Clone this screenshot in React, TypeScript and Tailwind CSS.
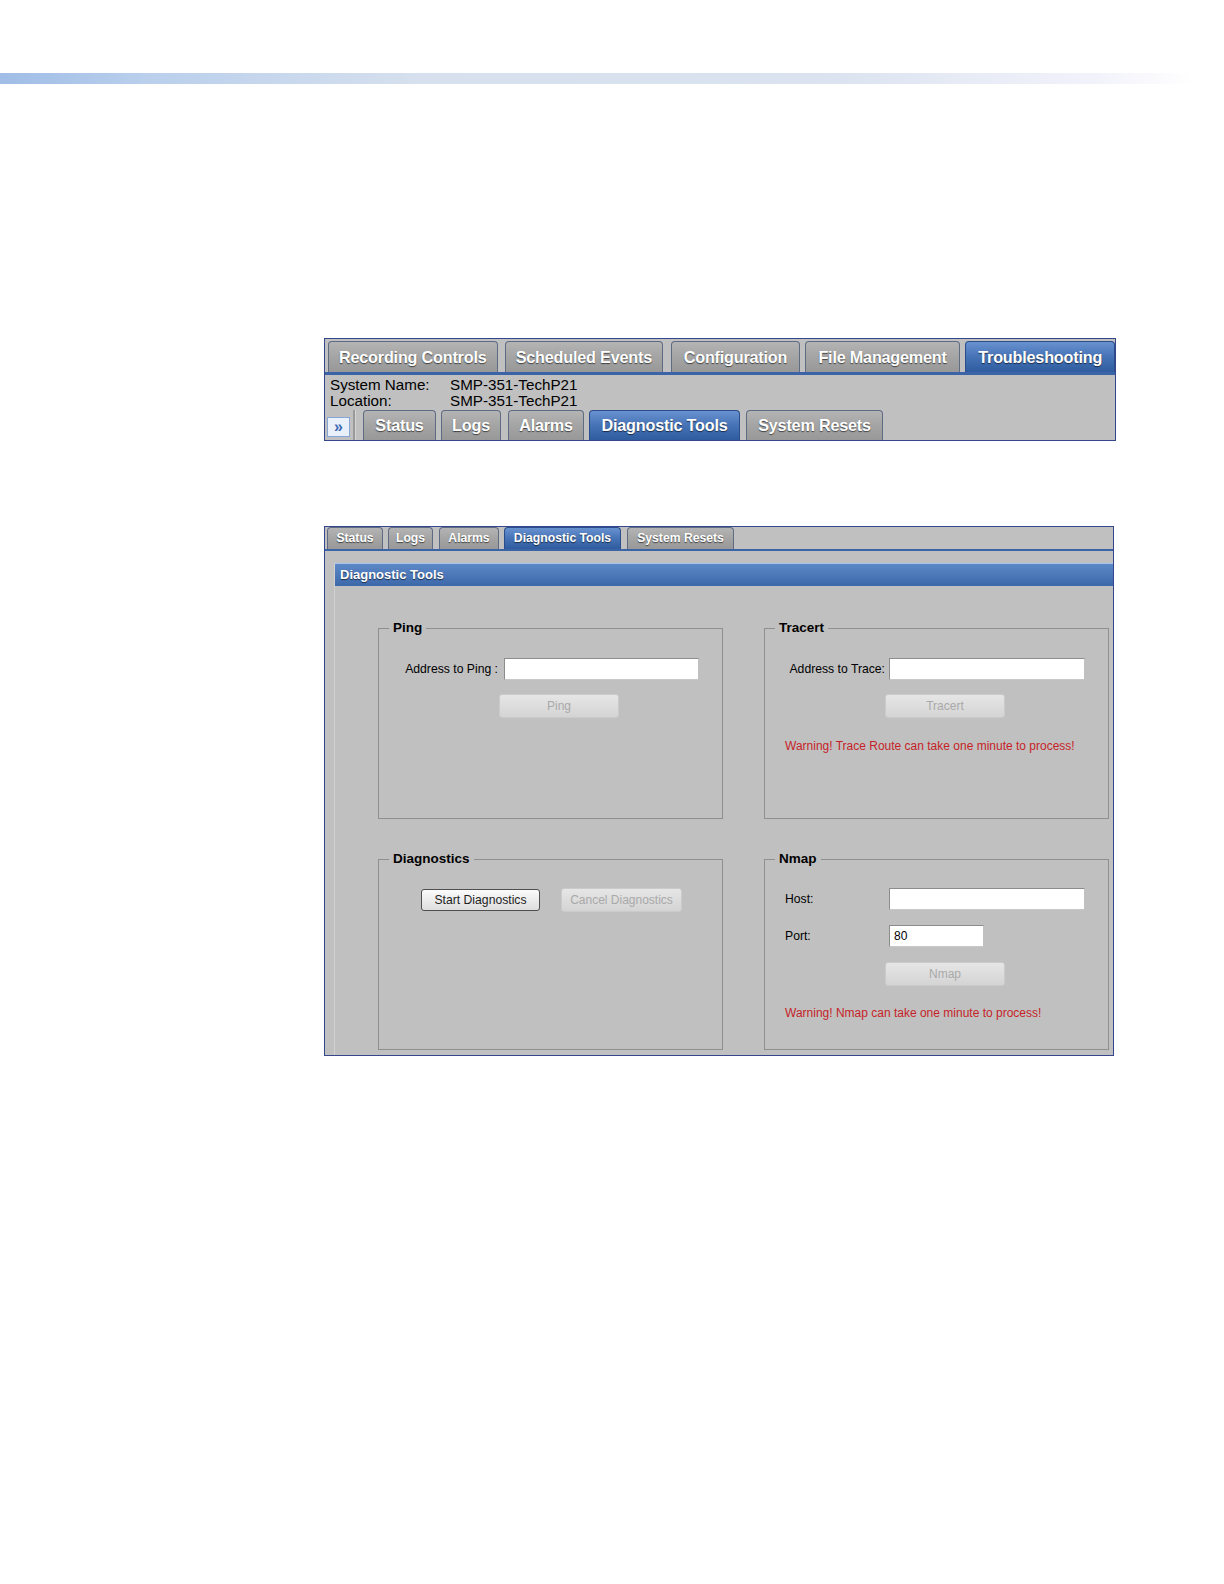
import React from "react";

const sans = "font-['Liberation_Sans',Arial,sans-serif]";
const shadow = "[text-shadow:0_1px_1px_rgba(0,0,0,0.6)]";
const tabOff =
  "border-[#5f6b85] bg-linear-to-b from-[#b4b4b4] via-[#a4a4a4] to-[#989898]";
const tabOn =
  "border-[#2b4d8b] bg-linear-to-b from-[#6891cf] via-[#4673b6] to-[#2f5c9f]";

const mainTabs = [
  { label: "Recording Controls", cls: "w-[170px]", on: false },
  { label: "Scheduled Events", cls: "w-[159px] ml-[7px]", on: false },
  { label: "Configuration", cls: "w-[129px] ml-[8px]", on: false },
  { label: "File Management", cls: "w-[156px] ml-[5px]", on: false },
  { label: "Troubleshooting", cls: "w-[150px] ml-[5px]", on: true },
];

const subTabs = [
  { label: "Status", cls: "w-[73px]", on: false },
  { label: "Logs", cls: "w-[60px] ml-[5px]", on: false },
  { label: "Alarms", cls: "w-[76px] ml-[7px]", on: false },
  { label: "Diagnostic Tools", cls: "w-[151px] ml-[5px]", on: true },
  { label: "System Resets", cls: "w-[137px] ml-[6px]", on: false },
];

const smallTabs = [
  { label: "Status", cls: "w-[56px]", on: false },
  { label: "Logs", cls: "w-[45px] ml-[5px]", on: false },
  { label: "Alarms", cls: "w-[60px] ml-[6px]", on: false },
  { label: "Diagnostic Tools", cls: "w-[117px] ml-[5px]", on: true },
  { label: "System Resets", cls: "w-[107px] ml-[6px]", on: false },
];

type Tab = { label: string; cls: string; on: boolean };

function TabRow({ tabs, size }: { tabs: Tab[]; size: string }) {
  return (
    <>
      {tabs.map((t) => (
        <div
          key={t.label}
          className={`flex items-center justify-center rounded-t-[4px] border border-b-0 font-bold text-white ${shadow} ${size} ${t.cls} ${t.on ? tabOn : tabOff}`}
        >
          {t.label}
        </div>
      ))}
    </>
  );
}

function DisabledButton({ label, cls }: { label: string; cls: string }) {
  return (
    <div
      className={`flex h-[24px] w-[120px] items-center justify-center rounded-[3px] border border-[#cbcbcb] bg-linear-to-b from-[#e6e6e6] to-[#d4d4d4] text-[12px] text-[#a9a9a9] ${cls}`}
    >
      {label}
    </div>
  );
}

function TextBox({ cls, value }: { cls: string; value?: string }) {
  return (
    <div
      className={`flex h-[22px] items-center border border-[#8c8c8c] border-b-[#c8c8c8] border-r-[#c0c0c0] bg-white pl-[4px] text-[12px] text-black ${cls}`}
    >
      {value}
    </div>
  );
}

function Box({ title, children }: { title: string; children: React.ReactNode }) {
  return (
    <fieldset className="m-0 h-[200px] min-w-0 border border-[#8f8f8f] p-0">
      <legend className="ml-[10px] px-[4px] text-[13.5px] font-bold leading-[18px] text-black">
        {title}
      </legend>
      {children}
    </fieldset>
  );
}

function Warning({ text, cls }: { text: string; cls: string }) {
  return (
    <div className={`ml-[20px] text-[12px] leading-[16px] text-[#c61f28] ${cls}`}>
      {text}
    </div>
  );
}

export default function App() {
  return (
    <div className={`bg-white pt-[73px] pb-[200px] ${sans}`}>
      <div className="h-[11px] w-[1192px] bg-[linear-gradient(90deg,#9fbde6_0%,#b9cfec_12%,#d6e0ee_35%,#dae3ef_70%,#e8ecf6_82%,#f2f2fb_92%,#ffffff_100%)]" />

      {/* first capture: main tabs */}
      <div className="ml-[324px] mt-[254px] flex h-[103px] w-[792px] flex-col overflow-hidden border border-[#34478c] bg-[#c0c0c0]">
        <div className="flex h-[36px] shrink-0 items-end border-b-[3px] border-[#3b64a6] pl-[3px]">
          <TabRow tabs={mainTabs} size="h-[31px] text-[16.2px] tracking-[-0.2px]" />
        </div>
        <div className="grid grid-cols-[120px_1fr] pl-[5px] pt-[2px] text-[15.2px] leading-[16px] text-black">
          <span>System Name:</span>
          <span>SMP-351-TechP21</span>
          <span>Location:</span>
          <span>SMP-351-TechP21</span>
        </div>
        <div className="mt-auto flex items-end pl-[2px]">
          <div className="mb-[3px] flex h-[20px] w-[23px] items-center justify-center border border-[#86a6d6] bg-[#e9f0fa] text-[16px] font-bold leading-none text-[#3b68b4]">
            »
          </div>
          <div className="ml-[3px] h-[30px] w-[2px] bg-[#9a9a9a]" />
          <div className="h-[30px] w-[1px] bg-[#d4d4d4]" />
          <div className="ml-[7px] flex items-end">
            <TabRow tabs={subTabs} size="h-[30px] text-[16.2px] tracking-[-0.2px]" />
          </div>
        </div>
      </div>

      {/* second capture: diagnostic tools */}
      <div className="ml-[324px] mt-[85px] flex h-[530px] w-[790px] flex-col overflow-hidden border border-[#34478c] bg-[#c0c0c0]">
        <div className="flex h-[24px] shrink-0 items-end border-b-[2px] border-[#3b64a6] pl-[2px]">
          <TabRow tabs={smallTabs} size="h-[22px] text-[12.2px]" />
        </div>
        <div className="ml-[9px] mt-[12px] flex flex-1 flex-col border-l border-[#d2d2d2]">
          <div className={`flex h-[23px] items-center border-t border-[#a8c2ec] bg-linear-to-b from-[#5d88c8] to-[#3c67a9] pl-[5px] text-[13px] font-bold text-white ${shadow}`}>
            Diagnostic Tools
          </div>
          <div className="grid grid-cols-[345px_345px] gap-x-[41px] gap-y-[31px] pl-[43px] pt-[33px]">
            <Box title="Ping">
              <div className="mt-[21px] flex items-center gap-[6px]">
                <span className="w-[119px] text-right text-[12.2px] text-black">
                  Address to Ping :
                </span>
                <TextBox cls="w-[195px]" />
              </div>
              <DisabledButton label="Ping" cls="ml-[120px] mt-[14px]" />
            </Box>

            <Box title="Tracert">
              <div className="mt-[21px] flex items-center gap-[4px]">
                <span className="w-[120px] text-right text-[12.2px] text-black">
                  Address to Trace:
                </span>
                <TextBox cls="w-[196px]" />
              </div>
              <DisabledButton label="Tracert" cls="ml-[120px] mt-[14px]" />
              <Warning
                text="Warning! Trace Route can take one minute to process!"
                cls="mt-[20px]"
              />
            </Box>

            <Box title="Diagnostics">
              <div className="ml-[42px] mt-[20px] flex items-center gap-[21px]">
                <div className="flex h-[22px] w-[119px] items-center justify-center rounded-[3px] border border-[#4f4f4f] bg-linear-to-b from-[#fbfbfb] to-[#dedede] text-[12.2px] text-[#1e1e1e]">
                  Start Diagnostics
                </div>
                <DisabledButton label="Cancel Diagnostics" cls="h-[22px] w-[121px]" />
              </div>
            </Box>

            <Box title="Nmap">
              <div className="mt-[20px] flex items-center">
                <span className="ml-[20px] w-[104px] text-[12.2px] text-black">Host:</span>
                <TextBox cls="w-[196px]" />
              </div>
              <div className="mt-[15px] flex items-center">
                <span className="ml-[20px] w-[104px] text-[12.2px] text-black">Port:</span>
                <TextBox cls="w-[95px]" value="80" />
              </div>
              <DisabledButton label="Nmap" cls="ml-[120px] mt-[15px]" />
              <Warning
                text="Warning! Nmap can take one minute to process!"
                cls="mt-[19px]"
              />
            </Box>
          </div>
        </div>
      </div>
    </div>
  );
}
